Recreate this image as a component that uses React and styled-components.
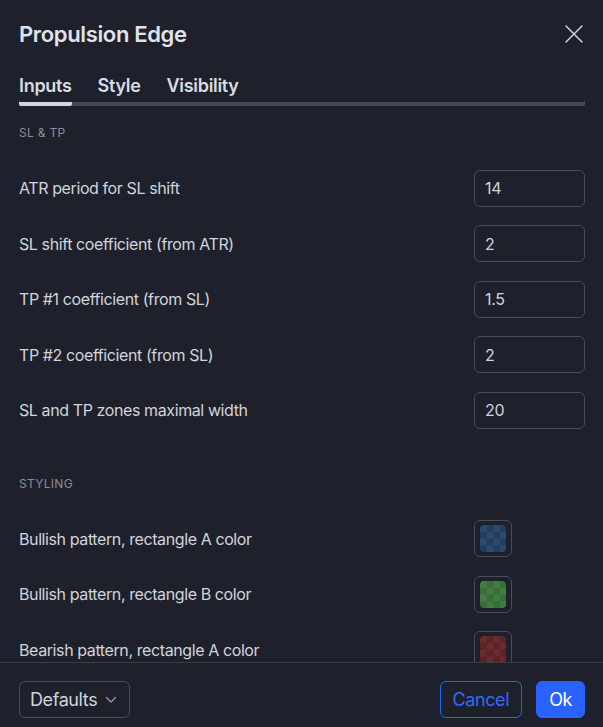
import React from "react";
import styled, { createGlobalStyle, css } from "styled-components";

const Global = createGlobalStyle`
  html, body { margin: 0; padding: 0; background: #1e212b; }
  body { font-family: Inter, "Noto Sans", sans-serif; -webkit-font-smoothing: antialiased; }
  * { box-sizing: border-box; }
`;

const Dialog = styled.div`
  width: 603px;
  height: 727px;
  background: #1e212b;
  color: #d1d4dc;
  display: flex;
  flex-direction: column;
  overflow: hidden;
`;

const Header = styled.div`
  height: 68px;
  padding: 0 16px 0 19px;
  display: flex;
  align-items: center;
  justify-content: space-between;
`;

const Title = styled.h1`
  margin: 0;
  font-size: 22px;
  font-weight: 600;
  color: #e1e3ea;
  letter-spacing: -0.35px;
`;

const CloseButton = styled.button`
  width: 26px;
  height: 26px;
  padding: 0;
  border: 0;
  background: transparent;
  color: #d1d4dc;
  display: flex;
  align-items: center;
  justify-content: center;
`;

const TabList = styled.div`
  margin: 0 18px 0 19px;
  display: flex;
  gap: 26px;
  height: 38px;
  border-radius: 2px;
  box-shadow: inset 0 -4px 0 #474a54;
`;

const Tab = styled.div`
  height: 38px;
  padding-top: 6px;
  font-size: 18px;
  font-weight: 600;
  line-height: 24px;
  letter-spacing: -0.3px;
  color: #d8dbe2;
  border-bottom: 4px solid transparent;
  border-radius: 2px;
  ${(p) =>
    p.$active &&
    css`
      border-bottom-color: #d1d4dc;
    `}
`;

const Content = styled.div`
  flex: 1;
  overflow: hidden;
  padding: 0 18px 0 19px;
`;

const Section = styled.section`
  & + & {
    margin-top: 19px;
  }
`;

const SectionTitle = styled.div`
  padding: 19px 0 19.25px;
  font-size: 12px;
  line-height: 16px;
  letter-spacing: 0.3px;
  text-transform: uppercase;
  color: #8b8e98;
`;

const Row = styled.div`
  height: 55.5px;
  display: flex;
  align-items: center;
  justify-content: space-between;
`;

const Label = styled.span`
  font-size: 16px;
  letter-spacing: -0.4px;
  color: #d1d4dc;
`;

const NumberField = styled.input`
  width: 111px;
  height: 37px;
  padding: 0 10px;
  border: 1px solid #4a4d57;
  border-radius: 6px;
  background: transparent;
  color: #d1d4dc;
  font-family: inherit;
  font-size: 16px;
  letter-spacing: -0.3px;
  outline: none;
`;

const SwatchButton = styled.div`
  width: 38px;
  height: 37px;
  margin-right: 73px;
  padding: 4px 5px;
  border: 1px solid #4a4d57;
  border-radius: 6px;
  display: flex;
`;

const SwatchFill = styled.div`
  flex: 1;
  border-radius: 4px;
  background-color: ${(p) => p.$a};
  background-image: linear-gradient(45deg, ${(p) => p.$b} 25%, transparent 25%, transparent 75%, ${(p) => p.$b} 75%),
    linear-gradient(45deg, ${(p) => p.$b} 25%, transparent 25%, transparent 75%, ${(p) => p.$b} 75%);
  background-size: 13.5px 13.5px;
  background-position: 0 0, 6.75px 6.75px;
`;

const Footer = styled.div`
  border-top: 1px solid #3a3d47;
  padding: 18px 18px 9px 19px;
  display: flex;
  align-items: center;
  gap: 14px;
`;

const SelectButton = styled.button`
  width: 111px;
  height: 37px;
  padding: 0 12px 0 10px;
  border: 1px solid #4a4d57;
  border-radius: 6px;
  background: transparent;
  color: #d1d4dc;
  font-family: inherit;
  font-size: 18px;
  letter-spacing: -0.4px;
  display: flex;
  align-items: center;
  justify-content: space-between;
  margin-right: auto;
`;

const ActionButton = styled.button`
  height: 37px;
  padding: 0 12px;
  border-radius: 6px;
  font-family: inherit;
  font-size: 18px;
  letter-spacing: -0.4px;
  border: 1px solid #2962ff;
  ${(p) =>
    p.$primary
      ? css`
          background: #2962ff;
          color: #ffffff;
        `
      : css`
          background: transparent;
          color: #2e6bff;
        `}
`;

const numberRows = [
  ["ATR period for SL shift", "14"],
  ["SL shift coefficient (from ATR)", "2"],
  ["TP #1 coefficient (from SL)", "1.5"],
  ["TP #2 coefficient (from SL)", "2"],
  ["SL and TP zones maximal width", "20"],
];

const colorRows = [
  ["Bullish pattern, rectangle A color", "#2a4b70", "#223d5c"],
  ["Bullish pattern, rectangle B color", "#417d41", "#386c38"],
  ["Bearish pattern, rectangle A color", "#6b2b2d", "#5a2426"],
];

export default function App() {
  return (
    <>
      <Global />
      <Dialog>
        <Header>
          <Title>Propulsion Edge</Title>
          <CloseButton aria-label="Close">
            <svg width="18" height="18" viewBox="0 0 18 18">
              <path d="M1 1L17 17M17 1L1 17" stroke="currentColor" strokeWidth="1.5" strokeLinecap="round" />
            </svg>
          </CloseButton>
        </Header>
        <TabList>
          <Tab $active>Inputs</Tab>
          <Tab>Style</Tab>
          <Tab>Visibility</Tab>
        </TabList>
        <Content>
          <Section>
            <SectionTitle>SL &amp; TP</SectionTitle>
            {numberRows.map(([label, value]) => (
              <Row key={label}>
                <Label>{label}</Label>
                <NumberField defaultValue={value} />
              </Row>
            ))}
          </Section>
          <Section>
            <SectionTitle>Styling</SectionTitle>
            {colorRows.map(([label, a, b]) => (
              <Row key={label}>
                <Label>{label}</Label>
                <SwatchButton>
                  <SwatchFill $a={a} $b={b} />
                </SwatchButton>
              </Row>
            ))}
          </Section>
        </Content>
        <Footer>
          <SelectButton>
            <span>Defaults</span>
            <svg width="12" height="8" viewBox="0 0 12 8">
              <path d="M1.5 1.5L6 6L10.5 1.5" stroke="#9598a1" strokeWidth="1.4" fill="none" strokeLinecap="round" strokeLinejoin="round" />
            </svg>
          </SelectButton>
          <ActionButton>Cancel</ActionButton>
          <ActionButton $primary>Ok</ActionButton>
        </Footer>
      </Dialog>
    </>
  );
}
